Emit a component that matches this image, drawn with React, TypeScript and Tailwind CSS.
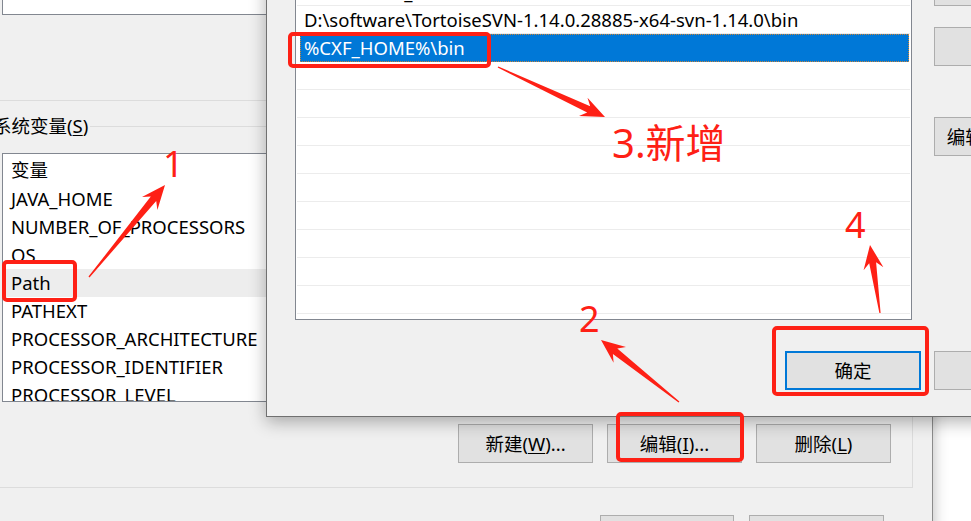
import React from "react";

type Pt = [number, number];

// tapered red arrow, tail -> tip
function arrowPoints(tail: Pt, tip: Pt): string {
  const [x1, y1] = tail;
  const [x2, y2] = tip;
  const len = Math.hypot(x2 - x1, y2 - y1);
  const ux = (x2 - x1) / len;
  const uy = (y2 - y1) / len;
  const nx = -uy;
  const ny = ux;
  const head = 24;
  const neck = 18;
  const hw = 10;
  const sw = 3.5;
  const bx = x2 - ux * head;
  const by = y2 - uy * head;
  const kx = x2 - ux * neck;
  const ky = y2 - uy * neck;
  const pts: Pt[] = [
    [x1 + nx * 0.6, y1 + ny * 0.6],
    [kx + nx * sw, ky + ny * sw],
    [bx + nx * hw, by + ny * hw],
    [x2, y2],
    [bx - nx * hw, by - ny * hw],
    [kx - nx * sw, ky - ny * sw],
    [x1 - nx * 0.6, y1 - ny * 0.6],
  ];
  return pts.map((p) => `${p[0].toFixed(1)},${p[1].toFixed(1)}`).join(" ");
}

const arrows: { tail: Pt; tip: Pt }[] = [
  { tail: [89, 277], tip: [165, 185] },
  { tail: [498, 67], tip: [605, 117] },
  { tail: [679, 402], tip: [601, 340] },
  { tail: [880, 313], tip: [870, 245] },
];

const sysVars = [
  "JAVA_HOME",
  "NUMBER_OF_PROCESSORS",
  "OS",
  "Path",
  "PATHEXT",
  "PROCESSOR_ARCHITECTURE",
  "PROCESSOR_IDENTIFIER",
  "PROCESSOR_LEVEL",
];

const pathRows = [
  "%CATALINA_HOME%\\bin",
  "D:\\software\\TortoiseSVN-1.14.0.28885-x64-svn-1.14.0\\bin",
  "%CXF_HOME%\\bin",
  "",
  "",
  "",
  "",
  "",
  "",
  "",
  "",
  "",
  "",
];

const WinButton = ({
  children,
  className = "",
  primary = false,
}: {
  children: React.ReactNode;
  className?: string;
  primary?: boolean;
}) => (
  <div
    className={`flex h-[39px] shrink-0 items-center justify-center whitespace-nowrap bg-[#e1e1e1] ${
      primary ? "border-2 border-[#0078d7]" : "border border-[#adadad]"
    } ${className}`}
  >
    {children}
  </div>
);

export default function App() {
  return (
    <div className="relative flex h-[521px] w-[971px] overflow-hidden bg-white font-['Noto_Sans','Noto_Sans_CJK_SC',sans-serif] text-[18.5px] text-black">
      {/* 环境变量 窗口 (后) */}
      <div className="flex h-[560px] w-[933px] shrink-0 flex-col border-r border-[#8c8c8c] bg-[#f0f0f0] shadow-[0_0_14px_rgba(0,0,0,0.28)]">
        <div className="ml-[2px] mt-[-10px] h-[25px] w-[900px] shrink-0 border border-[#828790] bg-white" />
        <div className="mt-[85px] h-px w-[912px] shrink-0 bg-[#dcdcdc]" />

        <fieldset className="ml-[-20px] mt-[13px] w-[933px] shrink-0 border border-[#dcdcdc] px-[10px] pb-[24px]">
          <legend className="px-[2px] leading-[24px]">
            系统变量(<span className="underline underline-offset-2">S</span>)
          </legend>

          <div className="ml-[11px] mt-[15px] h-[249px] w-[890px] overflow-hidden border border-[#828790] bg-white">
            <div className="h-[31px] pl-[8px] leading-[31px]">变量</div>
            {sysVars.map((v) => (
              <div
                key={v}
                className={`h-[28px] pl-[8px] leading-[28px] ${
                  v === "Path" ? "bg-[#ededed]" : ""
                }`}
              >
                {v}
              </div>
            ))}
          </div>

          <div className="mt-[22px] flex justify-end gap-[14px] pr-[11px]">
            <WinButton className="w-[135px]">
              新建(<span className="underline underline-offset-2">W</span>)...
            </WinButton>
            <WinButton className="w-[135px]">
              编辑(<span className="underline underline-offset-2">I</span>)...
            </WinButton>
            <WinButton className="w-[135px]">
              删除(<span className="underline underline-offset-2">L</span>)
            </WinButton>
          </div>
        </fieldset>

        <div className="mt-[27px] flex gap-[15px] pl-[600px]">
          <WinButton className="w-[134px]">确定</WinButton>
          <WinButton className="w-[135px]">取消</WinButton>
        </div>
      </div>
      <div className="flex-1" />

      {/* 编辑环境变量 窗口 (前) */}
      <div className="absolute left-[266px] top-[-34px] flex w-[833px] flex-col border border-[#707070] bg-[#f0f0f0] pb-[26px] shadow-[0_5px_16px_rgba(0,0,0,0.3)]">
        <div className="flex items-start px-[28px]">
          <div className="mt-[10px] h-[343px] w-[617px] shrink-0 overflow-hidden border border-[#828790] bg-white">
            {pathRows.map((r, i) =>
              i === 2 ? (
                <div
                  key={i}
                  className="ml-[4px] mr-[2px] h-[28px] border border-dotted border-[#c9853a] bg-[#0078d7] pl-[3px] leading-[26px] text-white"
                >
                  {r}
                </div>
              ) : (
                <div
                  key={i}
                  className="mx-[1px] h-[28px] whitespace-nowrap border-b border-[#ececec] pl-[7px] leading-[27px]"
                >
                  {r}
                </div>
              )
            )}
          </div>

          <div className="ml-[22px] flex w-[136px] shrink-0 flex-col">
            <WinButton className="w-[136px]">上移(U)</WinButton>
            <WinButton className="mt-[21px] w-[136px]">下移(O)</WinButton>
            <WinButton className="mt-[51px] w-[136px]">编辑文本(T)...</WinButton>
          </div>
        </div>

        <div className="mt-[31px] flex justify-end gap-[13px] px-[28px]">
          <WinButton primary className="w-[136px]">确定</WinButton>
          <WinButton className="w-[136px]">取消</WinButton>
        </div>
      </div>

      {/* 标注 */}
      <div className="absolute left-[2px] top-[260px] h-[42px] w-[75px] rounded-[5px] border-[4px] border-[#fe2015]" />
      <div className="absolute left-[288px] top-[32px] h-[36px] w-[203px] rounded-[5px] border-[4px] border-[#fe2015]" />
      <div className="absolute left-[616px] top-[412px] h-[50px] w-[128px] rounded-[5px] border-[4px] border-[#fe2015]" />
      <div className="absolute left-[772px] top-[326px] h-[70px] w-[157px] rounded-[5px] border-[4px] border-[#fe2015]" />

      <svg
        className="pointer-events-none absolute left-0 top-0"
        width={971}
        height={521}
        viewBox="0 0 971 521"
      >
        {arrows.map((a, i) => (
          <polygon key={i} points={arrowPoints(a.tail, a.tip)} fill="#fe2015" />
        ))}
      </svg>

      <div className="absolute left-[163px] top-[146px] text-[36px] leading-none text-[#fe2015]">1</div>
      <div className="absolute left-[579px] top-[301px] text-[36px] leading-none text-[#fe2015]">2</div>
      <div className="absolute left-[612px] top-[123px] text-[40px] leading-none text-[#fe2015]">3.新增</div>
      <div className="absolute left-[845px] top-[207px] text-[36px] leading-none text-[#fe2015]">4</div>
    </div>
  );
}
